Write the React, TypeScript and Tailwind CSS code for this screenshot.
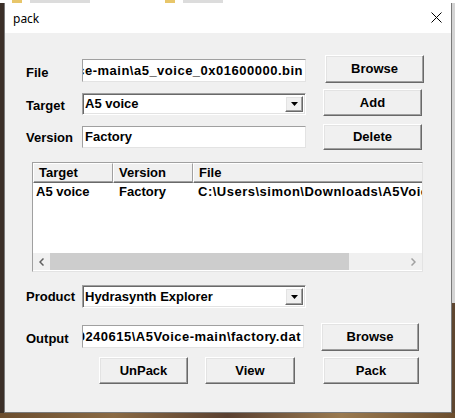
import { ReactNode } from "react";

// Classic Win32 dialog pieces
const font = "font-['Liberation_Sans',Arial,sans-serif] text-[13px] font-bold text-black";

function Btn({ children, className }: { children: ReactNode; className: string }) {
  return (
    <div
      className={`box-border flex items-center justify-center bg-[#f0f0f0] border border-t-white border-l-white border-r-[#696969] border-b-[#696969] shadow-[inset_-1px_-1px_0_#a0a0a0,inset_1px_1px_0_#e3e3e3] ${className}`}
    >
      {children}
    </div>
  );
}

function Field({ children, className }: { children: ReactNode; className: string }) {
  return (
    <div
      className={`box-border flex items-center justify-end overflow-hidden whitespace-nowrap bg-white border border-t-[#a0a0a0] border-l-[#a0a0a0] border-r-[#e3e3e3] border-b-[#e3e3e3] pr-[2px] ${className}`}
    >
      {children}
    </div>
  );
}

function Combo({ value, className }: { value: string; className: string }) {
  return (
    <div
      className={`box-border flex items-stretch bg-white border border-t-[#a0a0a0] border-l-[#a0a0a0] border-r-white border-b-white shadow-[inset_1px_1px_0_#696969,inset_-1px_-1px_0_#e3e3e3] p-[2px] ${className}`}
    >
      <div className="flex-1 flex items-center whitespace-nowrap overflow-hidden">{value}</div>
      <Btn className="w-[18px]">
        <svg width="7" height="4" viewBox="0 0 7 4">
          <path d="M0 0h7L3.5 4z" fill="#000" />
        </svg>
      </Btn>
    </div>
  );
}

function HeaderCell({ label, className }: { label: string; className: string }) {
  return (
    <div
      className={`box-border shrink-0 flex items-center pl-[5px] bg-[#f0f0f0] border-t border-l border-t-white border-l-white border-r border-r-[#a0a0a0] border-b border-b-[#696969] shadow-[inset_0_-1px_0_#a0a0a0] ${className}`}
    >
      {label}
    </div>
  );
}

export default function App() {
  return (
    <div className={`w-[455px] h-[418px] overflow-hidden flex flex-col bg-[#6b4d2e] ${font}`}>
      {/* desktop behind the dialog */}
      <div className="h-[3px] bg-white flex">
        <div className="ml-[12px] w-[10px] bg-[#e8c66a]" />
        <div className="ml-[8px] w-[60px] bg-[#dcdcdc]" />
        <div className="ml-[75px] w-[10px] bg-[#e8c66a]" />
        <div className="ml-[8px] w-[40px] bg-[#dcdcdc]" />
      </div>
      <div className="flex h-[410px]">
        <div className="w-[4px] bg-[#3b2f28]" />
        <div className="w-[448px] box-border border border-[#7a7a7a] border-t-0 flex flex-col">
          {/* title bar */}
          <div className="h-[30px] bg-white flex items-center justify-between pl-[8px] pr-[9px]">
            <span className="font-['Noto_Sans',sans-serif] font-normal text-[12px] mt-[2px]">pack</span>
            <svg width="11" height="11" viewBox="0 0 11 11" className="mt-[-1px]">
              <path d="M0.5 0.5l10 10M10.5 0.5l-10 10" stroke="#000" strokeWidth="1" />
            </svg>
          </div>

          {/* body */}
          <div className="flex-1 bg-[#f0f0f0] flex flex-col">
            <div className="flex items-start mt-[22px] h-[28px]">
              <div className="ml-[21px] w-[56px] mt-[10px] leading-[16px]">File</div>
              <Field className="mt-[4px] w-[224px] h-[23px] tracking-[0.5px]">C:\Users\simon\Downloads\A5Voice-main\a5_voice_0x01600000.bin</Field>
              <Btn className="ml-[19px] w-[99px] h-[28px]">Browse</Btn>
            </div>

            <div className="flex items-start mt-[6px] h-[27px]">
              <div className="ml-[21px] w-[56px] mt-[9px] leading-[16px]">Target</div>
              <Combo value="A5 voice" className="mt-[4px] w-[224px] h-[22px]" />
              <Btn className="ml-[17px] w-[99px] h-[27px]">Add</Btn>
            </div>

            <div className="flex items-start mt-[8px] h-[26px]">
              <div className="ml-[21px] w-[56px] mt-[6px] leading-[16px]">Version</div>
              <Field className="mt-[2px] w-[224px] h-[22px] !justify-start pl-[2px]">Factory</Field>
              <Btn className="ml-[17px] w-[99px] h-[26px]">Delete</Btn>
            </div>

            {/* list view */}
            <div className="mt-[12px] ml-[27px] w-[391px] h-[110px] box-border border border-[#a0a0a0] border-r-[#e3e3e3] border-b-[#e3e3e3] bg-white flex flex-col overflow-hidden">
              <div className="h-[20px] flex shrink-0">
                <HeaderCell label="Target" className="w-[80px]" />
                <HeaderCell label="Version" className="w-[80px]" />
                <HeaderCell label="File" className="flex-1 !border-r-0" />
              </div>
              <div className="h-[17px] flex items-center whitespace-nowrap shrink-0">
                <div className="w-[80px] shrink-0 pl-[3px]">A5 voice</div>
                <div className="w-[80px] shrink-0 pl-[6px]">Factory</div>
                <div className="shrink-0 pl-[5px] tracking-[0.5px]">C:\Users\simon\Downloads\A5Voice-main\a5_voice_0x01600000.bin</div>
              </div>
              <div className="flex-1" />
              <div className="h-[17px] flex bg-[#f0f0f0] shrink-0 mb-[1px]">
                <div className="w-[17px] flex items-center justify-center">
                  <svg width="5" height="8" viewBox="0 0 5 8">
                    <path d="M4.5 0.5L1 4l3.5 3.5" stroke="#606060" strokeWidth="1.5" fill="none" />
                  </svg>
                </div>
                <div className="w-[299px] bg-[#cdcdcd]" />
                <div className="flex-1" />
                <div className="w-[17px] flex items-center justify-center">
                  <svg width="5" height="8" viewBox="0 0 5 8">
                    <path d="M0.5 0.5L4 4L0.5 7.5" stroke="#a0a0a0" strokeWidth="1.5" fill="none" />
                  </svg>
                </div>
              </div>
            </div>

            <div className="flex items-start mt-[13px] h-[23px]">
              <div className="ml-[21px] w-[56px] mt-[4px] leading-[16px]">Product</div>
              <Combo value="Hydrasynth Explorer" className="w-[224px] h-[23px]" />
            </div>

            <div className="flex items-start mt-[15px] h-[28px]">
              <div className="ml-[21px] w-[56px] mt-[8px] leading-[16px]">Output</div>
              <Field className="mt-[2px] w-[222px] h-[23px] tracking-[0.5px]">
                C:\Users\simon\Downloads\20240615\A5Voice-main\factor
                <span className="inline-block w-px h-[15px] bg-black -mr-px" />
                y.dat
              </Field>
              <Btn className="ml-[17px] w-[98px] h-[28px]">Browse</Btn>
            </div>

            <div className="flex items-start mt-[6px] h-[27px]">
              <Btn className="ml-[94px] w-[89px] h-[27px]">UnPack</Btn>
              <Btn className="ml-[17px] w-[90px] h-[27px]">View</Btn>
              <Btn className="ml-[28px] w-[96px] h-[27px]">Pack</Btn>
            </div>
          </div>
        </div>
        <div className="flex-1 flex flex-col">
          <div className="h-[300px] bg-[#d4d4d4]" />
          <div className="flex-1 bg-[#5e4630]" />
        </div>
      </div>
      <div className="flex-1 bg-[linear-gradient(90deg,#6b4d2e,#8a6a44,#5a4030,#9a7a50,#6b4d2e)]" />
    </div>
  );
}
